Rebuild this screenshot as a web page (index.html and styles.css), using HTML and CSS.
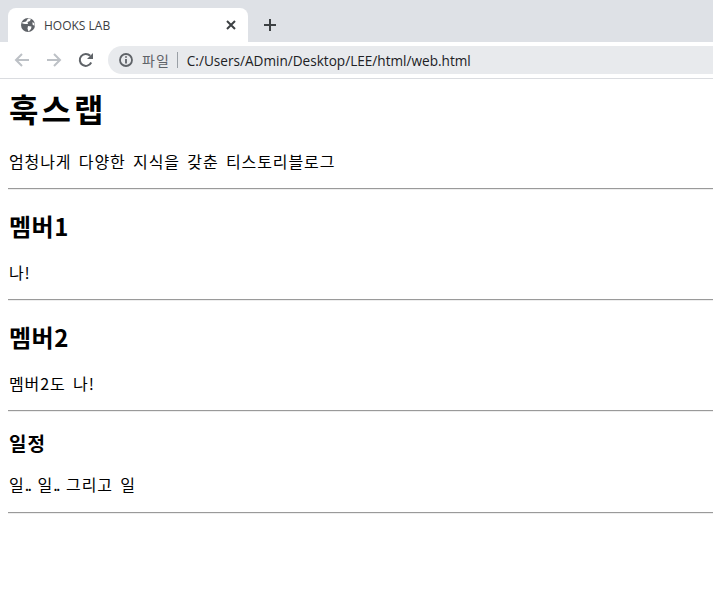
FILE: index.html
```html
<!DOCTYPE html>
<html lang="ko">
<head>
<meta charset="UTF-8" />
<title>HOOKS LAB</title>
<link rel="stylesheet" href="styles.css">
</head>
<body>
<div class="tabstrip">
  <div class="tab">
    <svg class="globe" width="16" height="16" viewBox="0 0 16 16">
      <circle cx="8" cy="8" r="7" fill="#5f6368"/>
      <path d="M2 5.5 6 4.5 8 1.5 11 1.5 10 4 7.5 5 8 7 5 7 2.5 6.5ZM8 9 11.5 9.5 11 12 8.5 14.5 7.5 11.5ZM12.5 5 14.5 6.5 14.5 9 12.5 7.5Z" fill="#fff"/>
    </svg>
    <span class="tab-title">HOOKS LAB</span>
    <svg class="tab-close" width="10" height="10" viewBox="0 0 10 10">
      <path d="M1 1 9 9M9 1 1 9" stroke="#3c4043" stroke-width="2" fill="none"/>
    </svg>
  </div>
  <svg class="new-tab" width="14" height="14" viewBox="0 0 14 14">
    <path d="M7 1V13M1 7H13" stroke="#3c4043" stroke-width="2" fill="none"/>
  </svg>
</div>
<div class="toolbar">
  <svg class="nav" width="16" height="16" viewBox="0 0 16 16">
    <path d="M15 8H2M8 2 2 8 8 14" stroke="#bdc1c6" stroke-width="2" fill="none"/>
  </svg>
  <svg class="nav" width="16" height="16" viewBox="0 0 16 16">
    <path d="M1 8H14M8 2 14 8 8 14" stroke="#bdc1c6" stroke-width="2" fill="none"/>
  </svg>
  <svg class="nav" width="16" height="16" viewBox="0 0 16 16">
    <path d="M13.2 10.5A6 6 0 1 1 12.2 3.8" stroke="#5f6368" stroke-width="2" fill="none"/>
    <path d="M15 1V7H9Z" fill="#5f6368"/>
  </svg>
  <div class="omnibox">
    <svg class="info" width="14" height="14" viewBox="0 0 14 14">
      <circle cx="7" cy="7" r="6" stroke="#5f6368" stroke-width="1.8" fill="none"/>
      <path d="M7 6V10.5M7 3.2V4.8" stroke="#5f6368" stroke-width="1.8" fill="none"/>
    </svg>
    <span class="scheme">파일</span>
    <span class="url">C:/Users/ADmin/Desktop/LEE/html/web.html</span>
  </div>
</div>
<div class="page">
  <h1>훅스랩</h1>
  <p>엄청나게 다양한 지식을 갖춘 티스토리블로그</p>
  <hr>
  <h2>멤버1</h2>
  <p>나!</p>
  <hr>
  <h2>멤버2</h2>
  <p>멤버2도 나!</p>
  <hr>
  <h3>일정</h3>
  <p class="last">일<span class="dots">..</span> 일<span class="dots">..</span> 그리고 일</p>
  <hr>
</div>
</body>
</html>
```

FILE: styles.css
```css
body {
  margin: 0;
  background-color: #fff;
  color: #000;
  font-family: "Noto Sans CJK KR", "Liberation Sans", sans-serif;
  overflow: hidden;
}

.tabstrip {
  display: flex;
  align-items: flex-end;
  height: 42px;
  background-color: #dee1e6;
}

.tab {
  display: flex;
  align-items: center;
  width: 240px;
  height: 34px;
  margin-left: 8px;
  padding: 0 12px;
  box-sizing: border-box;
  background-color: #fff;
  border-radius: 8px 8px 0 0;
}

.globe {
  flex: none;
}

.tab-title {
  flex: 1;
  margin-left: 8px;
  font-family: "Open Sans", "Noto Sans", sans-serif;
  font-size: 12px;
  color: #3c4043;
}

.new-tab {
  margin: 0 0 10px 15px;
}

.toolbar {
  display: flex;
  align-items: center;
  height: 36px;
  border-bottom: 1px solid #dadce0;
}

.nav {
  flex: none;
  margin-left: 14px;
  margin-right: 2px;
}

.omnibox {
  display: flex;
  align-items: center;
  flex: 1;
  height: 28px;
  margin-left: 12px;
  padding-left: 11px;
  background-color: #e8eaed;
  border-radius: 14px 0 0 14px;
  font-size: 14px;
}

.scheme {
  margin-left: 9px;
  padding-right: 7px;
  border-right: 1px solid #9aa0a6;
  line-height: 16px;
  letter-spacing: 1px;
  color: #5f6368;
}

.url {
  margin-left: 9px;
  font-family: "Open Sans", "Noto Sans", sans-serif;
  font-size: 13.6px;
  color: #202124;
}

.page {
  padding-left: 8px;
}

h1 {
  font-size: 32px;
  margin: 8px 0 22px;
  line-height: 42px;
  padding-left: 1px;
  letter-spacing: 3px;
}

h2 {
  font-size: 24px;
  margin: 20px 0;
  line-height: 32px;
  padding-left: 1px;
  letter-spacing: 0.5px;
}

h3 {
  font-size: 19px;
  margin: 18px 0 19px;
  line-height: 25px;
  padding-left: 1px;
  letter-spacing: 1px;
}

p {
  font-size: 16px;
  line-height: 21px;
  margin: 16px 0;
  padding-left: 1px;
  letter-spacing: 0.9px;
  word-spacing: 2px;
}

p.last {
  margin-bottom: 17px;
}

.dots {
  letter-spacing: -1.7px;
}

hr {
  margin: 8px 0;
  border: 0;
  border-top: 1px solid #9a9a9a;
  border-bottom: 1px solid #eee;
}
```
